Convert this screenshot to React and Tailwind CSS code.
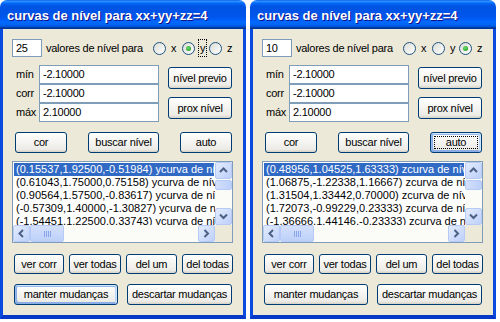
import React from 'react';

const FONT = "font-['Liberation_Sans',Arial,sans-serif]";

const Btn = ({ children, className = '', def, focus }) => (
  <div
    className={`relative flex items-center justify-center rounded-[3px] border border-[#003c74] bg-[linear-gradient(180deg,#fff,#ecebe6_86%,#d6d0c5)] text-black ${
      def
        ? 'shadow-[inset_-1px_1px_#cee7ff,inset_1px_2px_#98b8ea,inset_-2px_2px_#bcd4f6,inset_1px_-1px_#89ade4,inset_2px_-2px_#89ade4]'
        : ''
    } ${className}`}
  >
    {focus && <span className="absolute inset-[3px] border border-dotted border-black" />}
    <span className="relative">{children}</span>
  </div>
);

const Radio = ({ label, checked, focus, className = '' }) => (
  <div className={`flex items-center ${className}`}>
    <span className="flex h-[13px] w-[13px] items-center justify-center rounded-full border border-[#1d5281] bg-[linear-gradient(135deg,#dcdcd7,#fff)]">
      {checked && (
        <span className="h-[5px] w-[5px] rounded-full bg-[radial-gradient(circle_at_40%_40%,#6fdc6f,#138f13)]" />
      )}
    </span>
    <span className={`ml-[4px] px-[1px] leading-[16px] ${focus ? 'outline-1 outline-dotted outline-black' : 'outline-none'}`}>
      {label}
    </span>
  </div>
);

const Chevron = ({ dir }) => {
  const pts = {
    up: '1,5 4.5,1.5 8,5',
    down: '1,1.5 4.5,5 8,1.5',
    left: '5,1 1.5,4.5 5,8',
    right: '1.5,1 5,4.5 1.5,8',
  }[dir];
  const vert = dir === 'up' || dir === 'down';
  return (
    <svg width={vert ? 9 : 7} height={vert ? 7 : 9} viewBox={vert ? '0 0 9 7' : '0 0 7 9'}>
      <polyline points={pts} fill="none" stroke="#4d6185" strokeWidth="2" />
    </svg>
  );
};

const ScrollBtn = ({ dir }) => (
  <div className="flex h-[17px] w-[17px] shrink-0 items-center justify-center rounded-[2px] border border-[#b7caf5] bg-[linear-gradient(135deg,#e3ecfd,#bdd0fa)]">
    <Chevron dir={dir} />
  </div>
);

const Field = ({ label, value }) => (
  <div className="flex h-[19px] items-center">
    <span className="w-[23px]">{label}</span>
    <div className="flex h-[19px] w-[120px] items-center border border-[#7f9db9] bg-white pl-[3px]">{value}</div>
  </div>
);

const Window = ({ num, sel, items, focusY, focusAuto, defManter }) => (
  <div className="flex w-[246px] flex-col">
    <div className="h-[29px] rounded-t-[7px] bg-[linear-gradient(to_bottom,#0058ee_0%,#3593ff_4%,#288eff_6%,#127dff_8%,#036ffc_10%,#0262ee_14%,#0057e5_20%,#0054e3_24%,#0055eb_56%,#005bf5_66%,#026afe_76%,#0062ef_86%,#0052d6_92%,#0040ab_94%,#003092_100%)] pl-[7px] pt-[9px]">
      <div className="text-[13px] font-bold leading-[14px] text-white [text-shadow:1px_1px_#0f1089]">
        curvas de nível para xx+yy+zz=4
      </div>
    </div>
    <div className="h-[290px] border-x-[3px] border-b-[4px] border-x-[#0a4bdf] border-b-[#0838c6] bg-[#ece9d8] text-[11px] tracking-[-0.25px] text-black">
      <div className="mt-[10px] flex h-[18px] items-center pl-[9px]">
        <div className="flex h-[18px] w-[30px] items-center border border-[#7f9db9] bg-white pl-[3px]">{num}</div>
        <span className="ml-[4px] w-[107px]">valores de nível para</span>
        <Radio label="x" className="w-[29px]" />
        <Radio label="y" checked={sel === 'y'} focus={focusY} className="w-[27px]" />
        <Radio label="z" checked={sel === 'z'} />
      </div>

      <div className="mt-[8px] flex pl-[13px]">
        <div className="flex flex-col">
          <Field label="mín" value="-2.10000" />
          <Field label="corr" value="-2.10000" />
          <Field label="máx" value="2.10000" />
        </div>
        <div className="ml-[9px] flex flex-col gap-[8px] pt-[2px]">
          <Btn className="h-[22px] w-[64px]">nível previo</Btn>
          <Btn className="h-[22px] w-[64px]">prox nível</Btn>
        </div>
      </div>

      <div className="mt-[10px] flex pl-[12px]">
        <Btn className="h-[21px] w-[52px]">cor</Btn>
        <Btn className="ml-[21px] h-[21px] w-[71px]">buscar nível</Btn>
        <Btn className="ml-[21px] h-[21px] w-[52px]" def={focusAuto} focus={focusAuto}>auto</Btn>
      </div>

      <div className="ml-[9px] mt-[8px] flex h-[82px] w-[221px] flex-col border border-[#7f9db9] bg-white">
        <div className="flex h-[63px]">
          <div className="w-[202px] overflow-hidden p-[1px] tracking-normal">
            {items.map((t, i) => (
              <div
                key={i}
                className={`h-[13px] whitespace-nowrap pl-[2px] leading-[13px] ${i === 0 ? 'bg-[#316ac5] text-white' : ''}`}
              >
                {t}
              </div>
            ))}
          </div>
          <div className="flex w-[17px] flex-col bg-[#fbfbf8]">
            <ScrollBtn dir="up" />
            <div className="mt-[1px] h-[10px] w-[17px] rounded-[2px] border border-[#b7caf5] bg-[linear-gradient(90deg,#d4e0fc,#bcd0f9)]" />
            <div className="flex-1" />
            <ScrollBtn dir="down" />
          </div>
        </div>
        <div className="flex h-[17px]">
          <div className="flex w-[202px] bg-[#fbfbf8]">
            <ScrollBtn dir="left" />
            <div className="flex h-[17px] w-[34px] items-center justify-center gap-[1px] rounded-[2px] border border-[#b7caf5] bg-[linear-gradient(180deg,#d4e0fc,#bcd0f9)]">
              <span className="h-[6px] w-[1px] bg-[#8aa5e6]" />
              <span className="h-[6px] w-[1px] bg-[#8aa5e6]" />
              <span className="h-[6px] w-[1px] bg-[#8aa5e6]" />
              <span className="h-[6px] w-[1px] bg-[#8aa5e6]" />
            </div>
            <div className="flex-1" />
            <ScrollBtn dir="right" />
          </div>
          <div className="w-[17px] bg-[#ece9d8]" />
        </div>
      </div>

      <div className="mt-[11px] flex pl-[11px]">
        <Btn className="h-[20px] w-[50px]">ver corr</Btn>
        <Btn className="ml-[5px] h-[20px] w-[52px]">ver todas</Btn>
        <Btn className="ml-[5px] h-[20px] w-[51px]">del um</Btn>
        <Btn className="ml-[5px] h-[20px] w-[51px]">del todas</Btn>
      </div>

      <div className="mt-[10px] flex pl-[11px]">
        <Btn className="h-[21px] w-[104px]" def={defManter}>manter mudanças</Btn>
        <Btn className="ml-[9px] h-[21px] w-[105px]">descartar mudanças</Btn>
      </div>
    </div>
  </div>
);

export default function App() {
  return (
    <div className={`flex h-[322px] w-[500px] gap-[4px] bg-white ${FONT}`}>
      <Window
        num="25"
        sel="y"
        focusY
        defManter
        items={[
          '(0.15537,1.92500,-0.51984) ycurva de nível',
          '(0.61043,1.75000,0.75158) ycurva de nível',
          '(0.90564,1.57500,-0.83617) ycurva de nível',
          '(-0.57309,1.40000,-1.30827) ycurva de nível',
          '(-1.54451,1.22500,0.33743) ycurva de nível',
        ]}
      />
      <Window
        num="10"
        sel="z"
        focusAuto
        items={[
          '(0.48956,1.04525,1.63333) zcurva de nível',
          '(1.06875,-1.22338,1.16667) zcurva de nível',
          '(1.31504,1.33442,0.70000) zcurva de nível',
          '(1.72073,-0.99229,0.23333) zcurva de nível',
          '(-1.36666,1.44146,-0.23333) zcurva de nível',
        ]}
      />
    </div>
  );
}
